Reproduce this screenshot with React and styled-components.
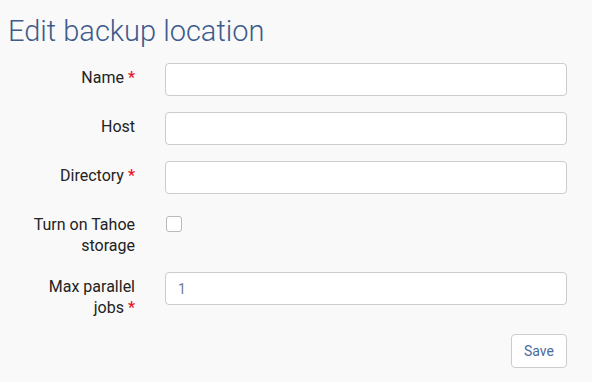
import React from 'react'
import styled, { createGlobalStyle } from 'styled-components'

const GlobalStyle = createGlobalStyle`
  body {
    margin: 0;
    background: #f9f9f9;
    font-family: Roboto, "Liberation Sans", sans-serif;
  }
`

const Page = styled.div`
  padding: 13px 25px 0 8px;
`

const Title = styled.h1`
  margin: 0 0 14px;
  font-size: 29px;
  font-weight: 300;
  line-height: 36px;
  color: #3d5b8c;
`

const Form = styled.form`
  display: flex;
  flex-direction: column;
  gap: 16px;
  margin: 0;
`

const Row = styled.div`
  display: flex;
  align-items: flex-start;
`

const Label = styled.label`
  width: 110px;
  margin-left: 17px;
  margin-right: 30px;
  padding-top: 4px;
  text-align: right;
  font-size: 16px;
  font-weight: 400;
  line-height: 21px;
  color: #222;
`

const Star = styled.span`
  display: inline-block;
  color: #e8141b;
  font-weight: 500;
  margin-left: 4px;
`

const Input = styled.input`
  flex: 1;
  box-sizing: border-box;
  height: 33px;
  padding: 0 12px;
  border: 1px solid #cccccc;
  border-radius: 4px;
  background: #fff;
  font-family: Roboto, "Liberation Sans", sans-serif;
  font-size: 14px;
  color: #6f7b94;
  outline: none;
`

const Check = styled.span`
  display: block;
  width: 14px;
  height: 14px;
  margin-top: 6px;
  margin-left: 1px;
  border: 1px solid #b9b9b9;
  border-radius: 3px;
  background: #fff;
`

const Actions = styled.div`
  display: flex;
  justify-content: flex-end;
  margin-top: 16px;
`

const Button = styled.button`
  height: 34px;
  padding: 0 12px;
  border: 1px solid #cccccc;
  border-radius: 4px;
  background: #fff;
  font-family: Roboto, "Liberation Sans", sans-serif;
  font-size: 14px;
  color: #4a6a9c;
`

function Field({ label, required, children }) {
  return (
    <Row>
      <Label>
        {label}
        {required && <Star>*</Star>}
      </Label>
      {children}
    </Row>
  )
}

export default function App() {
  return (
    <Page>
      <GlobalStyle />
      <Title>Edit backup location</Title>
      <Form onSubmit={(e) => e.preventDefault()}>
        <Field label="Name" required>
          <Input type="text" />
        </Field>
        <Field label="Host">
          <Input type="text" />
        </Field>
        <Field label="Directory" required>
          <Input type="text" />
        </Field>
        <Field label="Turn on Tahoe storage">
          <Check />
        </Field>
        <Field label="Max parallel jobs" required>
          <Input type="text" defaultValue="1" />
        </Field>
      </Form>
      <Actions>
        <Button>Save</Button>
      </Actions>
    </Page>
  )
}
